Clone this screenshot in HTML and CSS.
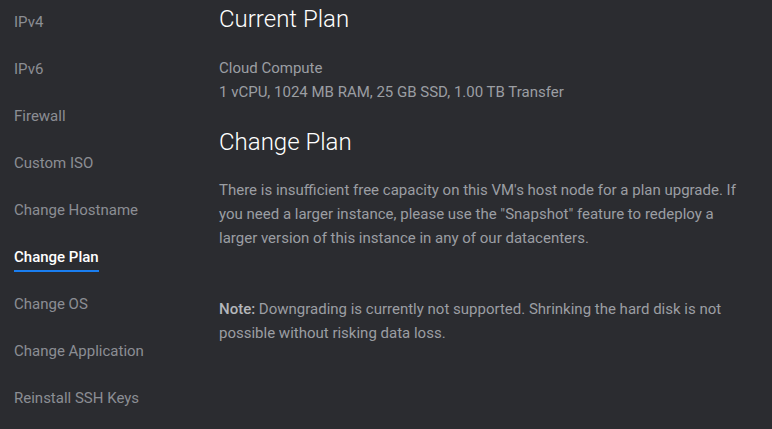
FILE: index.html
```html
<!DOCTYPE html>
<html>
<head>
<meta charset="utf-8">
<link rel="stylesheet" href="styles.css">
</head>
<body>
<div class="layout">
  <nav class="sidebar">
    <div class="item"><span>IPv4</span></div>
    <div class="item"><span>IPv6</span></div>
    <div class="item"><span>Firewall</span></div>
    <div class="item"><span>Custom ISO</span></div>
    <div class="item"><span>Change Hostname</span></div>
    <div class="item active"><span>Change Plan</span></div>
    <div class="item"><span>Change OS</span></div>
    <div class="item"><span>Change Application</span></div>
    <div class="item"><span>Reinstall SSH Keys</span></div>
  </nav>
  <main class="main">
    <h2 class="title">Current Plan</h2>
    <div class="block">
      <div>Cloud Compute</div>
      <div>1 vCPU, 1024 MB RAM, 25 GB SSD, 1.00 TB Transfer</div>
    </div>
    <h2 class="title second">Change Plan</h2>
    <p class="block">There is insufficient free capacity on this VM's host node for a plan upgrade. If you need a larger instance, please use the "Snapshot" feature to redeploy a larger version of this instance in any of our datacenters.</p>
    <p class="block note"><strong>Note:</strong> Downgrading is currently not supported. Shrinking the hard disk is not possible without risking data loss.</p>
  </main>
</div>
</body>
</html>
```

FILE: styles.css
```css
html, body {
  margin: 0;
  padding: 0;
  background: #2b2c30;
  font-family: Roboto, "Liberation Sans", sans-serif;
  height: 100%;
  overflow: hidden;
}
.layout {
  display: flex;
}
.sidebar {
  width: 205px;
  padding-left: 14px;
  flex: none;
}
.item {
  padding: 12px 0 15px;
  font-size: 15px;
  line-height: 20px;
  color: #8b8e94;
}
.item span {
  position: relative;
}
.item.active {
  color: #ffffff;
  font-weight: 500;
}
.item.active span::after {
  content: "";
  position: absolute;
  left: 0;
  right: 0;
  bottom: -6px;
  height: 2px;
  background: #1a7ef0;
}
.main {
  padding-top: 3px;
  width: 526px;
}
.title {
  margin: 0 0 21px;
  font-size: 24px;
  line-height: 32px;
  font-weight: 300;
  color: #ffffff;
}
.title.second {
  margin-top: 22px;
  margin-bottom: 20px;
}
.block {
  margin: 0 0 20px;
  font-size: 15px;
  line-height: 24px;
  color: #9b9ea3;
}
.note {
  margin-top: 47px;
}
.note strong {
  font-weight: 500;
  color: #b4b6ba;
}
```
